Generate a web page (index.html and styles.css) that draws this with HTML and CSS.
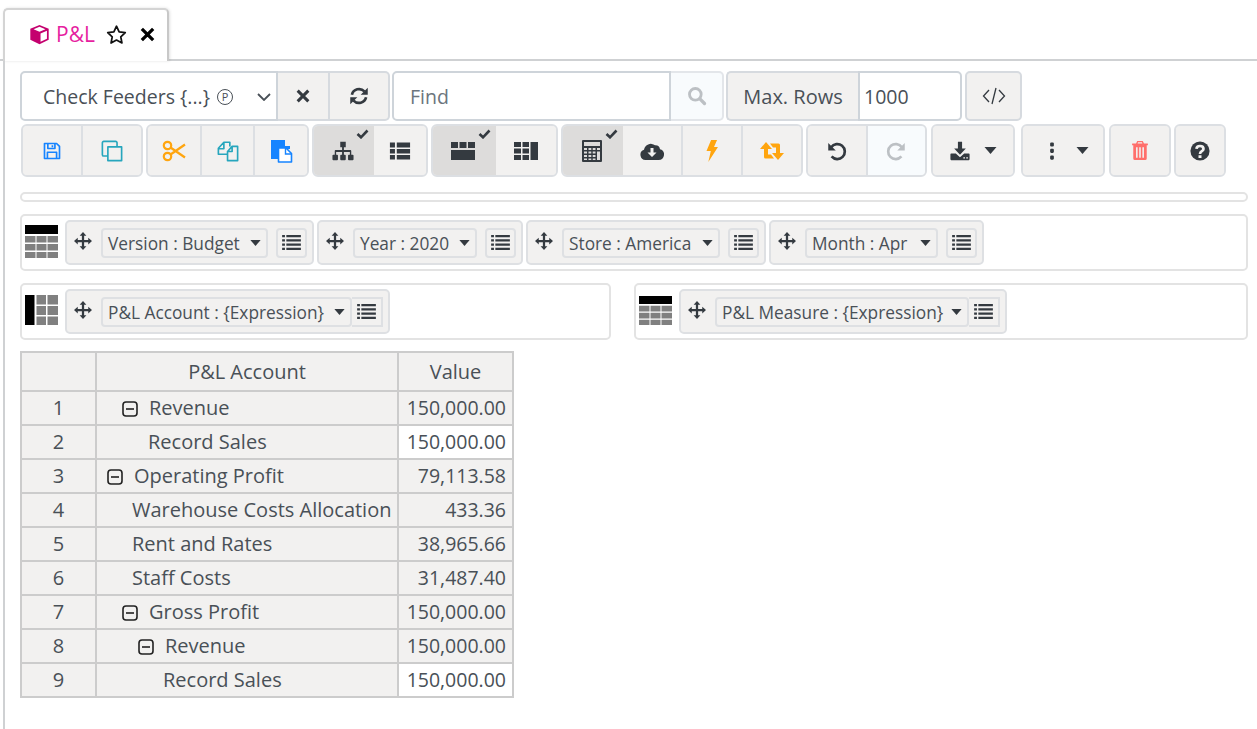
FILE: index.html
```html
<!DOCTYPE html>
<html lang="en">
<head>
    <meta charset="UTF-8">
    <title>P&amp;L</title>
    <link rel="stylesheet" href="styles.css">
</head>
<body>
    <svg class="sprite" xmlns="http://www.w3.org/2000/svg">
        <symbol id="i-cube" viewBox="0 0 24 24"><path fill="currentColor" d="M12 1 22.500 5.500V18L12 23 1.500 18V5.500Z"/><path fill="#fff" d="M12 3.200 18.800 6 12 8.800 5.200 6ZM13.200 10.800 20.500 7.800V16.800L13.200 20.200Z"/></symbol>
        <symbol id="i-star" viewBox="0 0 24 24"><path fill="none" stroke="currentColor" stroke-width="2" stroke-linejoin="round" d="M12 2.500 15 9l7 .9-5.100 4.800 1.300 7L12 18.300 5.800 21.700l1.300-7L2 9.900 9 9Z"/></symbol>
        <symbol id="i-x" viewBox="0 0 24 24"><path fill="none" stroke="currentColor" stroke-width="4.600" d="M4 4 20 20M20 4 4 20"/></symbol>
        <symbol id="i-sync" viewBox="0 0 24 24"><path fill="none" stroke="currentColor" stroke-width="3.200" d="M3.500 10.500A8.800 8.800 0 0 1 18.500 6.500M20.500 13.500A8.800 8.800 0 0 1 5.500 17.500"/><path fill="currentColor" d="M22.500 2V10.500H14ZM1.500 22V13.500H10Z"/></symbol>
        <symbol id="i-search" viewBox="0 0 24 24"><circle cx="10" cy="10" r="7" fill="none" stroke="currentColor" stroke-width="3.400"/><path stroke="currentColor" stroke-width="4" stroke-linecap="round" d="M15.500 15.500 21 21"/></symbol>
        <symbol id="i-code" viewBox="0 0 24 24"><path fill="none" stroke="currentColor" stroke-width="1.300" d="M7 6 1.500 12 7 18M17 6 22.500 12 17 18M14 4 10 20"/></symbol>
        <symbol id="i-save" viewBox="0 0 24 24"><path fill="none" stroke="currentColor" stroke-width="2" stroke-linejoin="round" d="M3 3H17.500L21 6.500V21H3ZM7 3V9H15.500V3M12.500 5V7.500M6.500 21V13.500H17.500V21"/></symbol>
        <symbol id="i-copy" viewBox="0 0 24 24"><path fill="none" stroke="currentColor" stroke-width="1.800" stroke-linejoin="round" d="M7.500 7.500H22.500V22.500H7.500ZM17.500 7.500V3A1.500 1.500 0 0 0 16 1.500H3A1.500 1.500 0 0 0 1.500 3V16A1.500 1.500 0 0 0 3 17.500H7.500"/></symbol>
        <symbol id="i-cut" viewBox="0 0 24 24"><g fill="none" stroke="currentColor" stroke-width="2.200"><circle cx="5.500" cy="6.500" r="3.700"/><circle cx="5.500" cy="17.500" r="3.700"/><path d="M8.500 8.500 23 18.500M8.500 15.500 23 5.500"/></g></symbol>
        <symbol id="i-files" viewBox="0 0 24 24"><path fill="none" stroke="currentColor" stroke-width="1.800" stroke-linejoin="round" d="M11 15.500H1.500V9L7.500 2.500H14V7M1.500 9.500H7.500V2.500M11.500 22.500V12.500L16.500 7H22.500V22.500ZM11.500 12.500H16.500V7"/></symbol>
        <symbol id="i-paste" viewBox="0 0 24 24"><path fill="currentColor" d="M2 1H16V7H21V10H9.500V20H2Z"/><path fill="#fff" stroke="currentColor" stroke-width="1.600" stroke-linejoin="round" d="M9.500 9H17L22.500 14.500V23H9.500Z"/><path fill="none" stroke="currentColor" stroke-width="1.400" d="M16.500 9V15H22.500"/></symbol>
        <symbol id="i-sitemap" viewBox="0 0 24 24"><path fill="currentColor" d="M9 2H15V8H13V11H20A1 1 0 0 1 21 12V16H22.500A1 1 0 0 1 23.500 17V21A1 1 0 0 1 22.500 22H18.500A1 1 0 0 1 17.500 21V17A1 1 0 0 1 18.500 16H19.500V13H13V16H14A1 1 0 0 1 15 17V21A1 1 0 0 1 14 22H10A1 1 0 0 1 9 21V17A1 1 0 0 1 10 16H11V13H4.500V16H5.500A1 1 0 0 1 6.500 17V21A1 1 0 0 1 5.500 22H1.500A1 1 0 0 1 .5 21V17A1 1 0 0 1 1.500 16H3V12A1 1 0 0 1 4 11H11V8H9Z"/></symbol>
        <symbol id="i-thlist" viewBox="0 0 24 24"><path fill="currentColor" d="M1 3.500H6.500V9H1ZM8.500 3.500H23V9H8.500ZM1 10.500H6.500V15.500H1ZM8.500 10.500H23V15.500H8.500ZM1 17H6.500V22H1ZM8.500 17H23V22H8.500Z" transform="translate(0 -.7)"/></symbol>
        <symbol id="i-subrow" viewBox="0 0 24 18"><path fill="currentColor" d="M0 0H7V6H0ZM8.500 0H15.500V6H8.500ZM17 0H24V6H17ZM0 8H24V18H0Z"/></symbol>
        <symbol id="i-subcol" viewBox="0 0 24 18"><path fill="currentColor" d="M0 0H7V5H0ZM8.500 0H15V5H8.500ZM0 6.500H7V11.500H0ZM8.500 6.500H15V11.500H8.500ZM0 13H7V18H0ZM8.500 13H15V18H8.500ZM16.500 0H24V18H16.500Z"/></symbol>
        <symbol id="i-calc" viewBox="0 0 20 22"><path fill="currentColor" fill-rule="evenodd" d="M1 0H19A1 1 0 0 1 20 1V21A1 1 0 0 1 19 22H1A1 1 0 0 1 0 21V1A1 1 0 0 1 1 0ZM2 2V6H18V2ZM2 8V10H5V8ZM6.500 8V10H9.300V8ZM10.700 8V10H13.500V8ZM15 8V10H18V8ZM2 11.500V13.500H5V11.500ZM6.500 11.500V13.500H9.300V11.500ZM10.700 11.500V13.500H13.500V11.500ZM15 11.500V20H18V11.500ZM2 15V17H5V15ZM6.500 15V17H9.300V15ZM10.700 15V17H13.500V15ZM2 18.500V20H5V18.500ZM6.500 18.500V20H9.300V18.500ZM10.700 18.500V20H13.500V18.500Z"/></symbol>
        <symbol id="i-cloud" viewBox="0 0 24 18"><path fill="currentColor" d="M5.500 18A5.300 5.300 0 0 1 4 7.700 7 7 0 0 1 15 3.200 4.700 4.700 0 0 1 20 7.200 5.500 5.500 0 0 1 18.500 18Z"/><path fill="#f2f1f0" d="M10.500 6H13.500V10.500H16.500L12 15 7.500 10.500H10.500Z"/></symbol>
        <symbol id="i-bolt" viewBox="0 0 14 24"><path fill="currentColor" d="M6 0H12.500L9.200 7.500H13.500L3 24 5.700 12H1Z"/></symbol>
        <symbol id="i-retweet" viewBox="0 0 24 18"><path fill="currentColor" d="M6 0 12 7H8V12.500H11L14 16.500H5.500A1.500 1.500 0 0 1 4 15V7H0ZM10 1.500H18.500A1.500 1.500 0 0 1 20 3V11H24L18 18 12 11H16V5.500H13Z"/></symbol>
        <symbol id="i-undo" viewBox="0 0 24 24"><path fill="none" stroke="currentColor" stroke-width="3.200" d="M5 7.500A9 9 0 1 1 5.500 18.500"/><path fill="currentColor" d="M1.500 2.500 10.500 11.500H1.500Z"/></symbol>
        <symbol id="i-redo" viewBox="0 0 24 24"><path fill="none" stroke="currentColor" stroke-width="3.200" d="M19 7.500A9 9 0 1 0 18.500 18.500"/><path fill="currentColor" d="M22.500 2.500 13.500 11.500H22.500Z"/></symbol>
        <symbol id="i-download" viewBox="0 0 24 24"><path fill="currentColor" d="M9.500 1H14.500V9H19L12 16.500 5 9H9.500ZM1.500 15H7L12 19.500 17 15H22.500A1 1 0 0 1 23.500 16V22A1 1 0 0 1 22.500 23H1.500A1 1 0 0 1 .5 22V16A1 1 0 0 1 1.500 15Z"/><path fill="#f2f1f0" d="M16 19.500H18V21H16ZM19.500 19.500H21.500V21H19.500Z"/></symbol>
        <symbol id="i-dots" viewBox="0 0 6 24"><path fill="currentColor" d="M.5 2A1.500 1.500 0 0 1 2 .5H4A1.500 1.500 0 0 1 5.500 2V4.500A1.500 1.500 0 0 1 4 6H2A1.500 1.500 0 0 1 .5 4.500ZM.5 10.500A1.500 1.500 0 0 1 2 9H4A1.500 1.500 0 0 1 5.500 10.500V13A1.500 1.500 0 0 1 4 14.500H2A1.500 1.500 0 0 1 .5 13ZM.5 19.500A1.500 1.500 0 0 1 2 18H4A1.500 1.500 0 0 1 5.500 19.500V22A1.500 1.500 0 0 1 4 23.500H2A1.500 1.500 0 0 1 .5 22Z"/></symbol>
        <symbol id="i-caret" viewBox="0 0 12 7"><path fill="currentColor" d="M0 0H12L6 7Z"/></symbol>
        <symbol id="i-trash" viewBox="0 0 20 24"><path fill="currentColor" fill-rule="evenodd" d="M6.500 0H13.500L15 3H19.500A.5.500 0 0 1 20 3.500V5.500H18.500V22A2 2 0 0 1 16.500 24H3.500A2 2 0 0 1 1.500 22V5.500H0V3.500A.5.500 0 0 1 .5 3H5ZM7.500 1.700 7 3H13L12.500 1.700ZM5 8V21H7V8ZM9 8V21H11V8ZM13 8V21H15V8Z"/></symbol>
        <symbol id="i-help" viewBox="0 0 24 24"><circle cx="12" cy="12" r="11.500" fill="currentColor"/><path fill="none" stroke="#f2f1f0" stroke-width="3.200" d="M7.800 9.500C8 4.800 16.200 5 16.200 9.500 16.200 12.500 12 12 12 15.500"/><path fill="#f2f1f0" d="M10.200 17H13.800V20.300H10.200Z"/></symbol>
        <symbol id="i-move" viewBox="0 0 24 24"><path fill="currentColor" d="M12 0 16.500 5H13.500V10.500H19V7.500L24 12 19 16.500V13.500H13.500V19H16.500L12 24 7.500 19H10.500V13.500H5V16.500L0 12 5 7.500V10.500H10.500V5H7.500Z"/></symbol>
        <symbol id="i-lines" viewBox="0 0 20 16"><path fill="currentColor" d="M0 0H3V2.500H0ZM4.500 0H20V2.500H4.500ZM0 4.500H3V7H0ZM4.500 4.500H20V7H4.500ZM0 9H3V11.500H0ZM4.500 9H20V11.500H4.500ZM0 13.500H3V16H0ZM4.500 13.500H20V16H4.500Z"/></symbol>
        <symbol id="i-axis-top" viewBox="0 0 33 33" preserveAspectRatio="none"><path fill="#000" d="M0 0H33V9H0Z"/><path fill="#808080" d="M0 11H10.500V17.500H0ZM11.500 11H21.500V17.500H11.500ZM22.500 11H33V17.500H22.500ZM0 19H10.500V25.500H0ZM11.500 19H21.500V25.500H11.500ZM22.500 19H33V25.500H22.500ZM0 27H10.500V33H0ZM11.500 27H21.500V33H11.500ZM22.500 27H33V33H22.500Z"/></symbol>
        <symbol id="i-axis-left" viewBox="0 0 33 30"><path fill="#000" d="M0 0H9.500V30H0Z"/><path fill="#808080" d="M11.500 0H21V9.500H11.500ZM22.500 0H33V9.500H22.500ZM11.500 11H21V20H11.500ZM22.500 11H33V20H22.500ZM11.500 21.500H21V30H11.500ZM22.500 21.500H33V30H22.500Z"/></symbol>
        <symbol id="i-collapse" viewBox="0 0 16 16"><rect x="1" y="1" width="14" height="14" rx="3" fill="none" stroke="currentColor" stroke-width="1.600"/><path stroke="currentColor" stroke-width="1.600" d="M4 8H12"/></symbol>
        <symbol id="i-check" viewBox="0 0 12 10"><path fill="none" stroke="currentColor" stroke-width="2.600" d="M1 5 4.500 8.300 11 1.500"/></symbol>
        <symbol id="i-chevron" viewBox="0 0 14 8"><path fill="none" stroke="currentColor" stroke-width="1.800" d="M1 1 7 7 13 1"/></symbol>
    </svg>

    <div class="tab-bar">
        <div class="tab">
            <svg class="icon tab-cube"><use href="#i-cube"/></svg>
            <span class="tab-title">P&amp;L</span>
            <svg class="icon tab-star"><use href="#i-star"/></svg>
            <svg class="icon tab-close"><use href="#i-x"/></svg>
        </div>
    </div>

    <div class="panel">
        <div class="query-row">
            <div class="joined">
                <div class="select-box">Check Feeders {...} <span class="private">P</span><svg class="icon chevron"><use href="#i-chevron"/></svg></div>
                <button class="btn plain clear-btn"><svg class="icon i16"><use href="#i-x"/></svg></button>
                <button class="btn plain sync-btn"><svg class="icon i20"><use href="#i-sync"/></svg></button>
            </div>
            <div class="joined">
                <input class="field find-field" type="text" placeholder="Find">
                <button class="btn plain search-btn"><svg class="icon i20"><use href="#i-search"/></svg></button>
            </div>
            <div class="joined">
                <span class="field-label">Max. Rows</span>
                <input class="field rows-field" type="text" value="1000">
            </div>
            <button class="btn plain code-btn"><svg class="icon i24"><use href="#i-code"/></svg></button>
        </div>

        <div class="tool-row">
            <div class="group g-file">
                <button class="btn blue"><svg class="icon i20"><use href="#i-save"/></svg></button>
                <button class="btn teal"><svg class="icon i22"><use href="#i-copy"/></svg></button>
            </div>
            <div class="group g-edit">
                <button class="btn orange"><svg class="icon i24"><use href="#i-cut"/></svg></button>
                <button class="btn teal"><svg class="icon i22"><use href="#i-files"/></svg></button>
                <button class="btn blue"><svg class="icon i24"><use href="#i-paste"/></svg></button>
            </div>
            <div class="group g-view">
                <button class="btn on on-62"><svg class="icon i22"><use href="#i-sitemap"/></svg><svg class="icon tick"><use href="#i-check"/></svg></button>
                <button class="btn"><svg class="icon i22"><use href="#i-thlist"/></svg></button>
            </div>
            <div class="group g-total">
                <button class="btn on on-65"><svg class="icon i-grid"><use href="#i-subrow"/></svg><svg class="icon tick"><use href="#i-check"/></svg></button>
                <button class="btn"><svg class="icon i-grid"><use href="#i-subcol"/></svg></button>
            </div>
            <div class="group g-calc">
                <button class="btn on on-62"><svg class="icon i-calc"><use href="#i-calc"/></svg><svg class="icon tick"><use href="#i-check"/></svg></button>
                <button class="btn"><svg class="icon i-wide"><use href="#i-cloud"/></svg></button>
                <button class="btn orange"><svg class="icon i-bolt"><use href="#i-bolt"/></svg></button>
                <button class="btn orange"><svg class="icon i-wide"><use href="#i-retweet"/></svg></button>
            </div>
            <div class="group g-history">
                <button class="btn"><svg class="icon i20"><use href="#i-undo"/></svg></button>
                <button class="btn disabled"><svg class="icon i20"><use href="#i-redo"/></svg></button>
            </div>
            <div class="group g-drop gap-4">
                <button class="btn split"><svg class="icon i20"><use href="#i-download"/></svg><svg class="icon caret"><use href="#i-caret"/></svg></button>
            </div>
            <div class="group g-drop gap-6">
                <button class="btn split more"><svg class="icon i-dots"><use href="#i-dots"/></svg><svg class="icon caret"><use href="#i-caret"/></svg></button>
            </div>
            <div class="group g-trash gap-4">
                <button class="btn salmon"><svg class="icon i-trash"><use href="#i-trash"/></svg></button>
            </div>
            <div class="group g-help">
                <button class="btn"><svg class="icon i18"><use href="#i-help"/></svg></button>
            </div>
        </div>

        <div class="progress"></div>

        <div class="axis-box filter-box">
            <svg class="axis-icon axis-icon-page"><use href="#i-axis-top"/></svg>
            <div class="chip">
                <svg class="icon move"><use href="#i-move"/></svg>
                <div class="chip-select s-version">Version : Budget<svg class="icon chip-caret"><use href="#i-caret"/></svg></div>
                <button class="chip-list"><svg class="icon lines"><use href="#i-lines"/></svg></button>
            </div>
            <div class="chip">
                <svg class="icon move"><use href="#i-move"/></svg>
                <div class="chip-select s-year">Year : 2020<svg class="icon chip-caret"><use href="#i-caret"/></svg></div>
                <button class="chip-list"><svg class="icon lines"><use href="#i-lines"/></svg></button>
            </div>
            <div class="chip">
                <svg class="icon move"><use href="#i-move"/></svg>
                <div class="chip-select s-store">Store : America<svg class="icon chip-caret"><use href="#i-caret"/></svg></div>
                <button class="chip-list"><svg class="icon lines"><use href="#i-lines"/></svg></button>
            </div>
            <div class="chip">
                <svg class="icon move"><use href="#i-move"/></svg>
                <div class="chip-select s-month">Month : Apr<svg class="icon chip-caret"><use href="#i-caret"/></svg></div>
                <button class="chip-list"><svg class="icon lines"><use href="#i-lines"/></svg></button>
            </div>
        </div>

        <div class="axis-row">
            <div class="axis-box">
                <svg class="axis-icon axis-icon-left"><use href="#i-axis-left"/></svg>
                <div class="chip">
                    <svg class="icon move"><use href="#i-move"/></svg>
                    <div class="chip-select s-account">P&amp;L Account : {Expression}<svg class="icon chip-caret"><use href="#i-caret"/></svg></div>
                    <button class="chip-list joined-list"><svg class="icon lines"><use href="#i-lines"/></svg></button>
                </div>
            </div>
            <div class="axis-box">
                <svg class="axis-icon axis-icon-col"><use href="#i-axis-top"/></svg>
                <div class="chip">
                    <svg class="icon move"><use href="#i-move"/></svg>
                    <div class="chip-select s-measure">P&amp;L Measure : {Expression}<svg class="icon chip-caret"><use href="#i-caret"/></svg></div>
                    <button class="chip-list joined-list"><svg class="icon lines"><use href="#i-lines"/></svg></button>
                </div>
            </div>
        </div>

        <table class="grid">
            <thead>
                <tr><th class="col-num"></th><th class="col-name">P&amp;L Account</th><th class="col-value">Value</th></tr>
            </thead>
            <tbody>
                <tr><td class="num">1</td><td class="name lvl-1"><svg class="icon toggle"><use href="#i-collapse"/></svg>Revenue</td><td class="value">150,000.00</td></tr>
                <tr><td class="num">2</td><td class="name lvl-1 leaf">Record Sales</td><td class="value open">150,000.00</td></tr>
                <tr><td class="num">3</td><td class="name lvl-0"><svg class="icon toggle"><use href="#i-collapse"/></svg>Operating Profit</td><td class="value">79,113.58</td></tr>
                <tr><td class="num">4</td><td class="name lvl-0 leaf">Warehouse Costs Allocation</td><td class="value">433.36</td></tr>
                <tr><td class="num">5</td><td class="name lvl-0 leaf">Rent and Rates</td><td class="value">38,965.66</td></tr>
                <tr><td class="num">6</td><td class="name lvl-0 leaf">Staff Costs</td><td class="value">31,487.40</td></tr>
                <tr><td class="num">7</td><td class="name lvl-1"><svg class="icon toggle"><use href="#i-collapse"/></svg>Gross Profit</td><td class="value">150,000.00</td></tr>
                <tr><td class="num">8</td><td class="name lvl-2"><svg class="icon toggle"><use href="#i-collapse"/></svg>Revenue</td><td class="value">150,000.00</td></tr>
                <tr><td class="num">9</td><td class="name lvl-2 leaf">Record Sales</td><td class="value open">150,000.00</td></tr>
            </tbody>
        </table>
    </div>
</body>
</html>
```

FILE: styles.css
```css
* {
    box-sizing: border-box;
}
html, body {
    height: 100%;
}
body {
    margin: 0;
    background: #fff;
    color: #495057;
    font-family: "Open Sans", "Noto Sans", sans-serif;
    font-size: 19.5px;
    overflow: hidden;
    display: flex;
    flex-direction: column;
}
.sprite {
    display: none;
}
.icon {
    display: block;
    flex: none;
}

/* tab strip */
.tab-bar {
    height: 61px;
    padding: 8px 0 0 3px;
    border-bottom: 2px solid #cfd1d3;
    flex: none;
}
.tab {
    width: 166px;
    height: 53px;
    padding: 0 0 3px 24px;
    display: flex;
    align-items: center;
    background: #fff;
    border: 2px solid #d4d4d4;
    border-bottom: none;
    border-right-color: #c8c8c8;
    border-radius: 5px 5px 0 0;
    box-shadow: 1px 0 3px rgba(0, 0, 0, 0.12);
}
.tab-cube {
    width: 21px;
    height: 21px;
    color: #c4006e;
}
.tab-title {
    margin-left: 6px;
    width: 50px;
    color: #e61fa0;
    font-size: 21px;
}
.tab-star {
    width: 21px;
    height: 21px;
    color: #111;
}
.tab-close {
    width: 17px;
    height: 17px;
    margin-left: 12px;
    color: #000;
}

/* everything below the tab */
.panel {
    flex: 1;
    margin-left: 3px;
    padding: 10px 9px 0 15px;
    border-left: 2px solid #cfd1d3;
}
.btn {
    position: relative;
    flex: 1;
    padding: 0;
    display: flex;
    align-items: center;
    justify-content: center;
    background: #f2f1f0;
    color: #343a40;
    border: none;
    border-right: 2px solid #dcdfe3;
}
.btn:last-child {
    border-right: none;
}
.btn.plain {
    flex: none;
    height: 50px;
    border: 2px solid #d6dadf;
    border-left: none;
}
.btn.plain:last-child {
    border-right: 2px solid #d6dadf;
    border-radius: 0 5px 5px 0;
}

/* query row */
.query-row {
    display: flex;
    height: 50px;
}
.joined {
    display: flex;
    margin-right: 2px;
}
.select-box {
    width: 258px;
    height: 50px;
    padding: 1px 0 0 21px;
    display: flex;
    align-items: center;
    position: relative;
    background: #fff;
    border: 2px solid #ced4da;
    border-radius: 5px 0 0 5px;
    white-space: pre;
}
.private {
    width: 16px;
    height: 16px;
    margin-left: 2px;
    display: flex;
    align-items: center;
    justify-content: center;
    border: 1px solid #495057;
    border-radius: 50%;
    font-size: 11px;
}
.chevron {
    position: absolute;
    right: 5px;
    top: 20px;
    width: 14px;
    height: 8px;
}
.clear-btn {
    width: 52px;
}
.sync-btn {
    width: 60px;
}
.field {
    height: 50px;
    padding: 1px 4px 0;
    color: #495057;
    font: inherit;
    background: #fff;
    border: 2px solid #ced4da;
    outline: none;
}
.field::placeholder {
    color: #6c757d;
}
.find-field {
    width: 279px;
    padding-left: 16px;
    border-radius: 5px 0 0 5px;
}
.search-btn.plain {
    width: 53px;
    color: #bcc0c4;
    background: #f8fbfd;
    border-color: #e3e6ea;
}
.search-btn.plain:last-child {
    border-color: #e3e6ea;
}
.field-label {
    width: 132px;
    height: 50px;
    padding-top: 1px;
    display: flex;
    align-items: center;
    justify-content: center;
    background: #f2f1f0;
    border: 2px solid #d6dadf;
    border-right: none;
    border-radius: 5px 0 0 5px;
    font-size: 20px;
}
.rows-field {
    width: 104px;
    border-radius: 0 5px 5px 0;
}
.btn.plain.code-btn {
    width: 57px;
    margin-left: 1px;
    border: 2px solid #d6dadf;
    border-radius: 5px;
}

/* toolbar */
.tool-row {
    display: flex;
    gap: 3px;
    height: 53px;
    margin: 3px 0 0 1px;
}
.group {
    display: flex;
    flex: none;
    overflow: hidden;
    background: #f2f1f0;
    border: 2px solid #dcdfe3;
    border-radius: 6px;
}
.g-file { width: 122px; }
.g-edit { width: 163px; }
.g-view { width: 116px; }
.g-total { width: 127px; }
.g-calc { width: 242px; }
.g-history { width: 121px; }
.g-drop { width: 84px; }
.g-trash { width: 62px; }
.g-help { width: 52px; }
.gap-4 { margin-left: 1px; }
.gap-6 { margin-left: 3px; }

.btn.on {
    background: #dddcdb;
    border-right: none;
    padding-right: 3px;
}
.on-62 { flex: 0 0 60px; }
.on-65 { flex: 0 0 63px; }
.btn.disabled {
    background: #f8fbfd;
    color: #bcc0c4;
}
.btn.split {
    gap: 14px;
}
.btn.more {
    gap: 21px;
    padding-left: 12px;
}
.btn.blue { color: #1684ff; }
.btn.teal { color: #27a6bd; }
.btn.orange { color: #ffa50f; }
.btn.salmon { color: #ff6f6b; }

.i16 { width: 16px; height: 16px; }
.i18 { width: 20px; height: 20px; }
.i20 { width: 20px; height: 20px; }
.i22 { width: 22px; height: 22px; }
.i24 { width: 24px; height: 24px; }
.i-grid { width: 24px; height: 18px; }
.i-calc { width: 20px; height: 22px; }
.i-wide { width: 24px; height: 18px; }
.i-bolt { width: 14px; height: 22px; }
.i-dots { width: 6px; height: 18px; }
.i-trash { width: 16px; height: 19px; }
.caret { width: 13px; height: 7px; }
.tick {
    position: absolute;
    top: 3px;
    right: 5px;
    width: 13px;
    height: 10px;
}

/* progress bar */
.progress {
    height: 10px;
    margin-top: 15px;
    background: #fff;
    border: 2px solid #e3e3e3;
    border-radius: 5px;
}

/* filters, rows and columns */
.axis-box {
    display: flex;
    gap: 3px;
    height: 57px;
    padding: 4px 3px;
    border: 2px solid #e3e3e3;
    border-radius: 5px;
}
.filter-box {
    margin-top: 12px;
}
.axis-row {
    display: grid;
    grid-template-columns: 591px 1fr;
    gap: 23px;
    margin-top: 12px;
}
.axis-icon {
    width: 33px;
    height: 33px;
    margin: 5px 4px 0 0;
    flex: none;
}
.axis-icon-left {
    height: 30px;
    margin-top: 6px;
}
.axis-icon-col {
    height: 29px;
    margin-top: 7px;
}
.chip {
    display: flex;
    align-items: center;
    height: 45px;
    padding: 0 5px 0 7px;
    background: #f2f1f0;
    border: 2px solid #dee0e3;
    border-radius: 5px;
    font-size: 17.3px;
}
.move {
    width: 18px;
    height: 18px;
    margin: -4px 9px 0 0;
    color: #343a40;
}
.chip-select {
    height: 30px;
    padding: 1px 0 0 5px;
    display: flex;
    align-items: center;
    justify-content: space-between;
    border: 2px solid #dee0e3;
    border-radius: 4px;
    white-space: nowrap;
}
.chip-caret {
    width: 11px;
    height: 6px;
    margin-right: 5px;
    color: #343a40;
}
.s-version { width: 167px; }
.s-year { width: 124px; }
.s-store { width: 158px; }
.s-month { width: 133px; }
.s-account { width: 251px; }
.s-measure { width: 254px; }
.chip-list {
    width: 31px;
    height: 30px;
    margin-left: 8px;
    padding: 0;
    display: flex;
    align-items: center;
    justify-content: center;
    background: #f2f1f0;
    color: #343a40;
    border: 2px solid #dee0e3;
    border-radius: 4px;
}
.chip-list.joined-list {
    margin-left: 0;
    border-left-width: 0;
    border-radius: 0;
}
.lines {
    width: 19px;
    height: 15px;
}

/* result table */
.grid {
    width: 492px;
    margin-top: 11px;
    table-layout: fixed;
    border-collapse: collapse;
    background: #f2f1f0;
    border: 2px solid #ccc;
    font-size: 20px;
}
.grid th, .grid td {
    height: 34px;
    padding: 0 0 1px;
    border: 2px solid #ccc;
    font-weight: normal;
    white-space: nowrap;
}
.grid th {
    height: 39px;
}
.col-num { width: 75px; }
.col-name { width: 302px; }
.col-value { width: 115px; }
.num {
    text-align: center;
}
.grid td.value {
    padding-right: 6px;
    font-size: 19.5px;
    text-align: right;
}
.value.open {
    background: #fff;
}
.toggle {
    display: inline-block;
    width: 16px;
    height: 16px;
    margin-right: 11px;
    vertical-align: -2px;
    color: #222;
}
.grid td.lvl-0 { padding-left: 10px; }
.grid td.lvl-1 { padding-left: 25px; }
.grid td.lvl-2 { padding-left: 41px; }
.grid td.lvl-0.leaf { padding-left: 35px; }
.grid td.lvl-1.leaf { padding-left: 51px; }
.grid td.lvl-2.leaf { padding-left: 66px; }
```
